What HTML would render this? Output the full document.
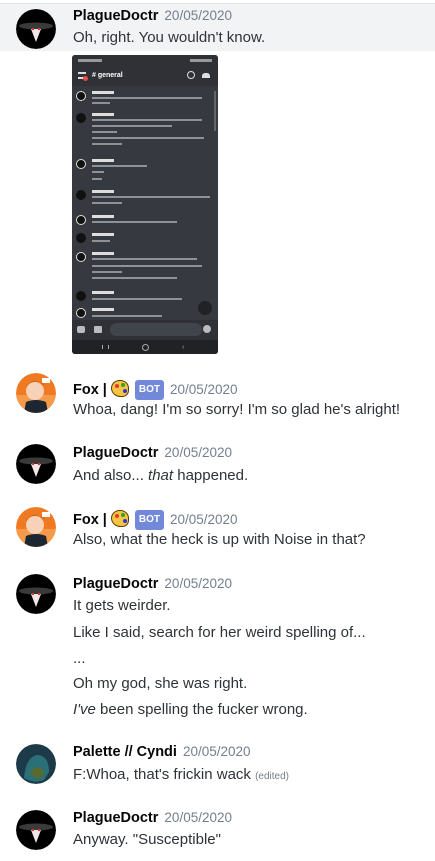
<!DOCTYPE html>
<html><head><meta charset="utf-8"><style>
body{margin:0;width:435px;height:861px;background:#fff;position:relative;overflow:hidden;font-family:"Liberation Sans",sans-serif;}
.a{position:absolute;left:16px;width:40px;height:40px;border-radius:50%;overflow:hidden}
.n{position:absolute;left:73px;font-size:14.5px;font-weight:bold;color:#060607;line-height:18px;white-space:nowrap}
.d{font-weight:normal;color:#747f8d;font-size:13.5px;margin-left:6px}
.t{position:absolute;left:73px;font-size:15px;color:#2e3338;line-height:20px;white-space:nowrap}
.bot{display:inline-block;background:#7289da;color:#fff;font-size:10px;padding:1px 4px;border-radius:3px;vertical-align:2px;margin-left:6px}
.pal{display:inline-block;width:18px;height:17px;border-radius:50% 50% 40% 55%;background:#f5c542;border:1px solid #5a3d00;vertical-align:-3px;margin-left:4px;position:relative;box-sizing:border-box}
.pal i{position:absolute;width:4px;height:4px;border-radius:50%}
.ph{position:absolute;left:72px;top:55px;width:146px;height:299px;background:#36393f;border-radius:3px;overflow:hidden}
.ph div{position:absolute}
.ma{left:4px;width:10px;height:10px;border-radius:50%;background:#111}
.mn{left:20px;height:3px;width:22px;background:#ddd}
.ml{left:20px;height:2px;background:#8e9297}
</style></head><body>
<div style="position:absolute;left:0;top:4px;width:435px;height:47px;background:#f2f3f5"></div>
<div style="position:absolute;left:0;top:3px;width:435px;height:1px;background:#e3e5e8"></div>

<svg width="0" height="0" style="position:absolute"><defs>
<g id="pd"><circle cx="20" cy="20" r="20" fill="#000"/><ellipse cx="20" cy="17" rx="17" ry="3.5" fill="#3a3a3a"/><path d="M15 20 L25 20 L20 33 Z" fill="#f2e6e6"/><circle cx="17" cy="20" r="1.2" fill="#c33"/><circle cx="23" cy="20" r="1.2" fill="#c33"/></g>
<g id="fx"><circle cx="20" cy="20" r="20" fill="#f07a22"/><rect x="0" y="22" width="40" height="18" fill="#f59a4a"/><circle cx="19" cy="18" r="9" fill="#f7d2b8"/><path d="M10 14 Q19 2 29 13 L27 10 Q19 6 11 12Z" fill="#b5561c"/><path d="M8 40 L10 29 Q20 25 30 29 L32 40Z" fill="#1d2633"/><rect x="26" y="5" width="8" height="5" fill="#fff"/></g>
</defs></svg>

<svg class="a" style="top:9px" viewBox="0 0 40 40"><use href="#pd"/></svg>
<div class="n" style="top:7px">PlagueDoctr<span class="d">20/05/2020</span></div>
<div class="t" style="top:28px">Oh, right. You wouldn't know.</div>

<div class="ph">
<div style="left:0;top:0;width:146px;height:11px;background:#2f3136"></div>
<div style="left:6px;top:4px;width:24px;height:3px;background:#999"></div>
<div style="left:118px;top:4px;width:22px;height:3px;background:#999"></div>
<div style="left:0;top:11px;width:146px;height:20px;background:#2f3136"></div>
<div style="left:6px;top:17px;width:8px;height:7px;border-top:2px solid #ddd;border-bottom:2px solid #ddd;box-sizing:border-box"></div>
<div style="left:11px;top:21px;width:5px;height:5px;border-radius:50%;background:#f04747"></div>
<div style="left:20px;top:16px;color:#fff;font-size:7px;font-weight:bold;line-height:9px">#&nbsp;general</div>
<div style="left:115px;top:16px;width:6px;height:6px;border:1px solid #ddd;border-radius:50%"></div>
<div style="left:130px;top:18px;width:8px;height:5px;background:#ddd;border-radius:3px 3px 0 0"></div>
<div style="left:142px;top:36px;width:2px;height:40px;background:#666"></div>
<div class="ma" style="top:36px;border:1px solid #ddd;box-sizing:border-box"></div><div class="mn" style="top:36px"></div><div class="ml" style="top:42px;width:110px"></div><div class="ml" style="top:47px;width:18px"></div>
<div class="ma" style="top:58px"></div><div class="mn" style="top:58px"></div><div class="ml" style="top:64px;width:110px"></div><div class="ml" style="top:70px;width:80px"></div><div class="ml" style="top:76px;width:25px"></div><div class="ml" style="top:82px;width:112px"></div><div class="ml" style="top:88px;width:30px"></div>
<div class="ma" style="top:104px;border:1px solid #ddd;box-sizing:border-box"></div><div class="mn" style="top:104px"></div><div class="ml" style="top:110px;width:55px"></div><div class="ml" style="top:116px;width:12px"></div><div class="ml" style="top:123px;width:10px"></div>
<div class="ma" style="top:135px"></div><div class="mn" style="top:135px"></div><div class="ml" style="top:141px;width:118px"></div><div class="ml" style="top:147px;width:30px"></div>
<div class="ma" style="top:160px;border:1px solid #ddd;box-sizing:border-box"></div><div class="mn" style="top:160px"></div><div class="ml" style="top:166px;width:85px"></div>
<div class="ma" style="top:178px"></div><div class="mn" style="top:178px"></div><div class="ml" style="top:185px;width:18px"></div>
<div class="ma" style="top:197px;border:1px solid #ddd;box-sizing:border-box"></div><div class="mn" style="top:197px"></div><div class="ml" style="top:203px;width:105px"></div><div class="ml" style="top:210px;width:110px"></div><div class="ml" style="top:216px;width:30px"></div><div class="ml" style="top:222px;width:85px"></div>
<div class="ma" style="top:236px"></div><div class="mn" style="top:236px"></div><div class="ml" style="top:243px;width:90px"></div>
<div class="ma" style="top:253px;border:1px solid #ddd;box-sizing:border-box"></div><div class="mn" style="top:253px"></div><div class="ml" style="top:260px;width:70px"></div>
<div style="left:126px;top:246px;width:14px;height:14px;border-radius:50%;background:#202225"></div>
<div style="left:0;top:265px;width:146px;height:20px;background:#2f3136"></div>
<div style="left:5px;top:271px;width:8px;height:7px;background:#b9bbbe;border-radius:2px"></div>
<div style="left:22px;top:271px;width:8px;height:7px;background:#b9bbbe;border-radius:1px"></div>
<div style="left:38px;top:268px;width:92px;height:13px;background:#40444b;border-radius:7px"></div>
<div style="left:131px;top:270px;width:8px;height:8px;background:#b9bbbe;border-radius:50%"></div>
<div style="left:0;top:285px;width:146px;height:14px;background:#202225"></div>
<div style="left:30px;top:290px;width:5px;height:4px;border-left:1px solid #aaa;border-right:1px solid #aaa"></div>
<div style="left:70px;top:289px;width:5px;height:5px;border:1px solid #aaa;border-radius:50%"></div>
<div style="left:110px;top:289px;color:#aaa;font-size:7px;line-height:7px">‹</div>
</div>

<svg class="a" style="top:373px" viewBox="0 0 40 40"><use href="#fx"/></svg>
<div class="n" style="top:380px">Fox |<span class="pal"><i style="left:3px;top:3px;background:#e33"></i><i style="left:9px;top:2px;background:#2a2"></i><i style="left:11px;top:8px;background:#33d"></i></span><span class="bot">BOT</span><span class="d">20/05/2020</span></div>
<div class="t" style="top:400px">Whoa, dang! I'm so sorry! I'm so glad he's alright!</div>

<svg class="a" style="top:444px" viewBox="0 0 40 40"><use href="#pd"/></svg>
<div class="n" style="top:444px">PlagueDoctr<span class="d">20/05/2020</span></div>
<div class="t" style="top:466px">And also... <i>that</i> happened.</div>

<svg class="a" style="top:507px" viewBox="0 0 40 40"><use href="#fx"/></svg>
<div class="n" style="top:510px">Fox |<span class="pal"><i style="left:3px;top:3px;background:#e33"></i><i style="left:9px;top:2px;background:#2a2"></i><i style="left:11px;top:8px;background:#33d"></i></span><span class="bot">BOT</span><span class="d">20/05/2020</span></div>
<div class="t" style="top:530px">Also, what the heck is up with Noise in that?</div>

<svg class="a" style="top:574px" viewBox="0 0 40 40"><use href="#pd"/></svg>
<div class="n" style="top:575px">PlagueDoctr<span class="d">20/05/2020</span></div>
<div class="t" style="top:596px">It gets weirder.</div>
<div class="t" style="top:623px">Like I said, search for her weird spelling of...</div>
<div class="t" style="top:649px">...</div>
<div class="t" style="top:674px">Oh my god, she was right.</div>
<div class="t" style="top:700px"><i>I've</i> been spelling the fucker wrong.</div>

<svg class="a" style="top:744px" viewBox="0 0 40 40"><circle cx="20" cy="20" r="20" fill="#1d3a48"/><path d="M8 34 Q10 12 22 11 Q33 12 33 28 L28 36 Q18 40 8 34Z" fill="#2b6f78"/><path d="M14 28 Q20 20 28 26 L26 34 Q18 36 14 28Z" fill="#556b2f"/></svg>
<div class="n" style="top:743px">Palette // Cyndi<span class="d">20/05/2020</span></div>
<div class="t" style="top:765px">F:Whoa, that's frickin wack <span style="font-size:10px;color:#747f8d">(edited)</span></div>

<svg class="a" style="top:810px" viewBox="0 0 40 40"><use href="#pd"/></svg>
<div class="n" style="top:809px">PlagueDoctr<span class="d">20/05/2020</span></div>
<div class="t" style="top:830px">Anyway. "Susceptible"</div>
</body></html>
